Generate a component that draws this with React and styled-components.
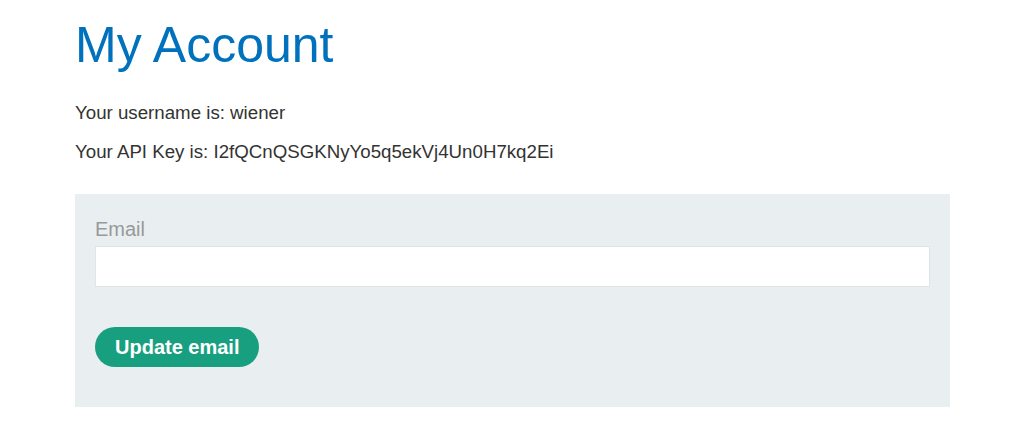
import React from "react";
import styled, { createGlobalStyle } from "styled-components";

const GlobalStyle = createGlobalStyle`
    html, body {
        margin: 0;
        padding: 0;
        background: #fff;
    }
    body {
        font-family: "Liberation Sans", Arial, sans-serif;
        color: #333332;
    }
`;

const Page = styled.main`
    padding: 0 77px 0 75px;
`;

const Title = styled.h1`
    margin: 0;
    padding-top: 15px;
    font-size: 50px;
    font-weight: 400;
    line-height: 60px;
    color: #0071bc;
`;

const Info = styled.p`
    margin: ${props => (props.first ? "25px" : "14px")} 0 0;
    font-size: 18.7px;
    line-height: 25px;
`;

const Panel = styled.form`
    margin-top: 30px;
    background: #e9eef1;
    padding: 23px 20px 40px;
    display: flex;
    flex-direction: column;
    align-items: flex-start;
`;

const Label = styled.label`
    font-size: 20px;
    line-height: 24px;
    color: #999;
`;

const Input = styled.input`
    box-sizing: border-box;
    width: 100%;
    height: 41px;
    margin-top: 5px;
    border: 1px solid #e1e4e6;
    background: #fff;
    font-size: 16px;
    padding: 0 10px;
    outline: none;
`;

const Button = styled.button`
    margin-top: 40px;
    height: 40px;
    padding: 0 20px;
    border: none;
    border-radius: 20px;
    background: #189f7f;
    color: #fff;
    font-family: "Liberation Sans", Arial, sans-serif;
    font-weight: 700;
    font-size: 20px;
    cursor: pointer;
`;

const App = () => (
    <>
        <GlobalStyle />
        <Page>
            <Title>My Account</Title>
            <Info first>Your username is: wiener</Info>
            <Info>Your API Key is: I2fQCnQSGKNyYo5q5ekVj4Un0H7kq2Ei</Info>
            <Panel onSubmit={e => e.preventDefault()}>
                <Label htmlFor="email">Email</Label>
                <Input id="email" type="email" name="email" />
                <Button type="submit">Update email</Button>
            </Panel>
        </Page>
    </>
);

export default App;
